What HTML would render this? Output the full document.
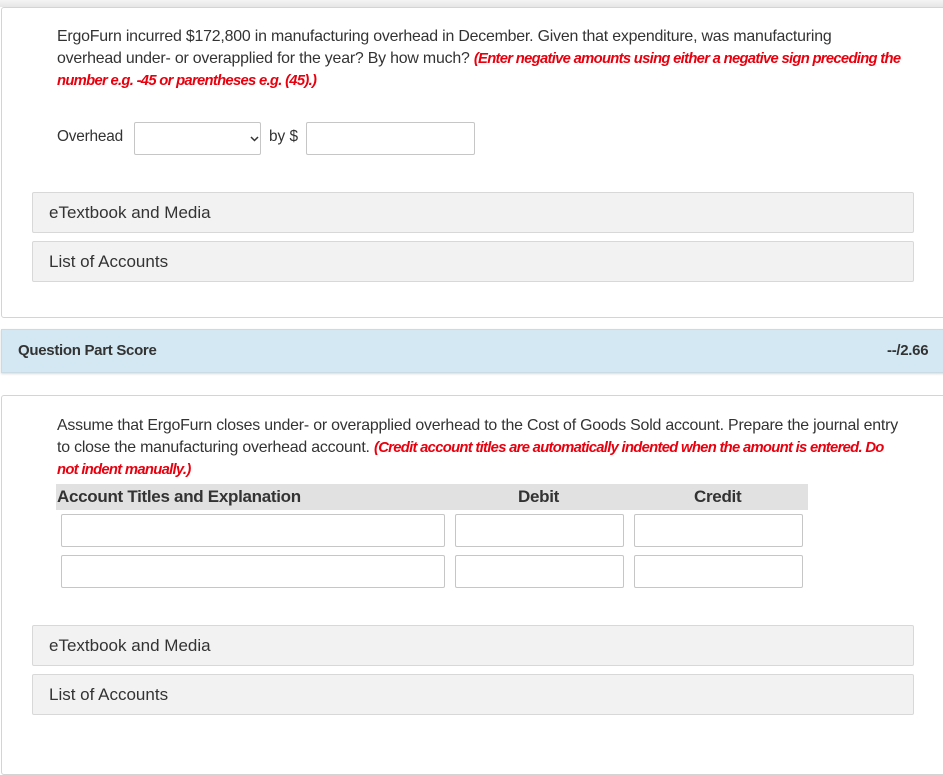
<!DOCTYPE html>
<html><head><style>
*{box-sizing:border-box;margin:0;padding:0}
body{width:943px;height:756px;overflow:hidden;background:#fff;font-family:"Liberation Sans",sans-serif;color:#333;position:relative}
.a{position:absolute}
.card{position:absolute;left:1px;width:960px;border:1px solid #d4d4d4;border-radius:3px;background:#fff}
.txt{font-size:15.9px;line-height:22px;letter-spacing:-0.2px;white-space:nowrap}
.red{color:#e8000e;font-weight:bold;font-style:italic;letter-spacing:-0.7px;font-size:14.8px}
.acc{position:absolute;left:32px;width:882px;height:41px;background:#f2f2f2;border:1px solid #d8d8d8;border-radius:2px;font-size:17px;padding-left:16px;line-height:39px;color:#333}
.in{position:absolute;height:33px;border:1px solid #c6c6c6;border-radius:2px;background:#fff}
</style></head><body>
<div class="a" style="left:0;top:0;width:943px;height:7px;background:linear-gradient(#f4f4f4,#e6e6e6)"></div>
<div class="card" style="top:7px;height:311px"></div>
<div class="a txt" style="left:57px;top:26px">ErgoFurn incurred $172,800 in manufacturing overhead in December. Given that expenditure, was manufacturing<br>overhead under- or overapplied for the year? By how much? <span class="red">(Enter negative amounts using either a negative sign preceding the</span><br><span class="red">number e.g. -45 or parentheses e.g. (45).)</span></div>
<div class="a" style="left:57px;top:128px;font-size:15.4px;letter-spacing:-0.2px">Overhead</div>
<div class="in" style="left:134px;top:122px;width:127px"><svg class="a" style="left:115px;top:13px" width="9" height="6" viewBox="0 0 9 6"><path d="M1 1l3.5 3.5L8 1" stroke="#333" stroke-width="1.5" fill="none"/></svg></div>
<div class="a" style="left:269px;top:128px;font-size:15.4px">by $</div>
<div class="in" style="left:306px;top:122px;width:169px"></div>
<div class="acc" style="top:192px">eTextbook and Media</div>
<div class="acc" style="top:241px">List of Accounts</div>
<div class="a" style="left:1px;top:329px;width:960px;height:44px;background:#d3e8f3;border:1px solid #cbdbe4;box-shadow:0 1px 2px rgba(0,0,0,.15)"></div>
<div class="a" style="left:18px;top:342px;font-size:15px;font-weight:bold;letter-spacing:-0.3px">Question Part Score</div>
<div class="a" style="left:887px;top:342px;font-size:15px;font-weight:bold;letter-spacing:-0.3px">--/2.66</div>
<div class="card" style="top:395px;height:380px"></div>
<div class="a txt" style="left:57px;top:415px">Assume that ErgoFurn closes under- or overapplied overhead to the Cost of Goods Sold account. Prepare the journal entry<br>to close the manufacturing overhead account. <span class="red">(Credit account titles are automatically indented when the amount is entered. Do</span><br><span class="red">not indent manually.)</span></div>
<div class="a" style="left:56px;top:484px;width:752px;height:26px;background:#e1e1e1;font-size:17px;font-weight:bold;line-height:26px;letter-spacing:-0.3px">
<span class="a" style="left:1px">Account Titles and Explanation</span><span class="a" style="left:462px">Debit</span><span class="a" style="left:638px">Credit</span></div>
<div class="in" style="left:61px;top:514px;width:384px"></div>
<div class="in" style="left:455px;top:514px;width:169px"></div>
<div class="in" style="left:634px;top:514px;width:169px"></div>
<div class="in" style="left:61px;top:555px;width:384px"></div>
<div class="in" style="left:455px;top:555px;width:169px"></div>
<div class="in" style="left:634px;top:555px;width:169px"></div>
<div class="acc" style="top:625px">eTextbook and Media</div>
<div class="acc" style="top:674px">List of Accounts</div>
</body></html>
